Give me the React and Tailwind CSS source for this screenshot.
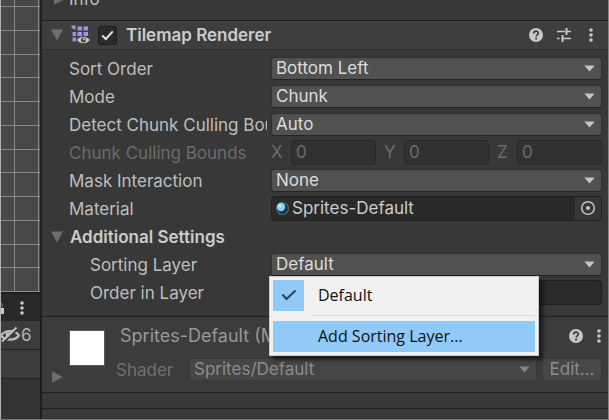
import React from "react";

const UI = "font-['Inter','Liberation_Sans',sans-serif] text-[17px] leading-5";

function Arrow({ className = "text-[#c4c4c4]" }) {
  return (
    <svg
      className={`pointer-events-none absolute right-[7px] top-[8px] ${className}`}
      width="11"
      height="7"
      viewBox="0 0 11 7"
      aria-hidden="true"
    >
      <path d="M0.3 0.5h10.4L5.5 6.5z" fill="currentColor" />
    </svg>
  );
}

function Dropdown({ id, value }) {
  return (
    <div className="relative min-w-0 flex-1">
      <select
        id={id}
        defaultValue={value}
        className="block h-[23px] w-full appearance-none rounded-[3px] border border-[#303030] border-b-[#242424] bg-[#515151] pl-1 pr-6 leading-5 text-[#dcdcdc] outline-none"
      >
        <option>{value}</option>
      </select>
      <Arrow />
    </div>
  );
}

function Row({ id, label, indent = false, muted = false, children }) {
  return (
    <div className="flex h-7 items-center gap-1 pl-[27px] pr-[6px]">
      <label
        htmlFor={id}
        className={`w-[198px] shrink-0 overflow-hidden whitespace-nowrap pt-0.5 ${indent ? "pl-[21px]" : ""} ${
          muted ? "text-[#6c6c6c]" : "text-[#bebebe]"
        }`}
      >
        {label}
      </label>
      {children}
    </div>
  );
}

function AxisField({ axis }) {
  const id = `bounds-${axis}`;
  return (
    <div className="flex min-w-0 flex-1 items-center">
      <label htmlFor={id} className="w-5 shrink-0 text-[#6c6c6c]">
        {axis}
      </label>
      <input
        id={id}
        disabled
        defaultValue="0"
        className="h-[25px] w-full min-w-0 rounded-[4px] border border-[#2b2b2b] border-t-[#252525] bg-[#313131] px-1 text-[#6c6c6c]"
      />
    </div>
  );
}

function Triangle({ right = false, className = "" }) {
  return (
    <svg className={`shrink-0 ${className}`} width="12" height="12" viewBox="0 0 12 12" aria-hidden="true">
      <path d={right ? "M1 0.3L11.7 6L1 11.7z" : "M0 0.5h12L6 11.5z"} fill="#6e6e6e" />
    </svg>
  );
}

function HelpIcon() {
  return (
    <svg width="16" height="16" viewBox="0 0 16 16" aria-hidden="true">
      <circle cx="8" cy="8" r="7" fill="#c8c8c8" />
      <path
        d="M5.7 6.4C5.7 3.2 10.3 3.4 10.3 6.1C10.3 7.8 8.2 7.8 8.2 9.5"
        fill="none"
        stroke="#3c3c3c"
        strokeWidth="1.7"
      />
      <rect x="7.2" y="10.6" width="1.9" height="1.9" fill="#3c3c3c" />
    </svg>
  );
}

function PresetIcon() {
  return (
    <svg width="16" height="16" viewBox="0 0 16 16" aria-hidden="true">
      <g stroke="#c8c8c8" fill="none">
        <path d="M1 4.5h8M10.5 4.5H15M1 11.5h2.5M6.5 11.5H15" strokeWidth="1.6" />
        <path d="M10.5 1v7M6.5 8v7" strokeWidth="2" />
      </g>
    </svg>
  );
}

function DotsIcon() {
  return (
    <svg width="6" height="16" viewBox="0 0 6 16" aria-hidden="true">
      <g fill="#c8c8c8">
        <circle cx="3" cy="3" r="1.8" />
        <circle cx="3" cy="8" r="1.8" />
        <circle cx="3" cy="13" r="1.8" />
      </g>
    </svg>
  );
}

function TilemapIcon() {
  return (
    <svg className="shrink-0" width="20" height="20" viewBox="0 0 20 20" aria-hidden="true">
      <g fill="#a78ee6">
        <path d="M0.5 0.5h4v4h-1.5l-2.5-2z" />
        <rect x="6.5" y="1.5" width="4.5" height="4" />
        <rect x="12.5" y="1.5" width="4.5" height="4" />
        <rect x="1.5" y="7" width="3.5" height="4" />
        <rect x="6.5" y="7" width="4.5" height="4" />
        <rect x="12.5" y="7" width="4.5" height="4" />
        <rect x="1.5" y="12.5" width="3.5" height="4" />
      </g>
      <path
        d="M5.5 15C8.5 10.2 16 10.2 19.4 15C16 19.8 8.5 19.8 5.5 15z"
        fill="#c8c8c0"
        stroke="#3e3e3e"
        strokeWidth="0.8"
      />
      <circle cx="12.4" cy="15" r="2.5" fill="#4a4a4a" />
      <circle cx="12.9" cy="14.3" r="1" fill="#c8c8c8" />
    </svg>
  );
}

function SceneGrid() {
  const rows = [6, 30, 54, 77, 101, 125, 149, 172, 196, 220, 244, 267, 291];
  return (
    <svg className="block w-full" height="292" viewBox="0 0 39 292" preserveAspectRatio="none" aria-hidden="true">
      <rect width="39" height="292" fill="#484848" />
      <g fill="#8a8a8a">
        {rows.map((y) => (
          <rect key={y} x="0" y={y} width="39" height="1" />
        ))}
        <rect x="13" y="0" width="1" height="292" />
        <rect x="37" y="0" width="1" height="292" />
      </g>
    </svg>
  );
}

function LeftPanel() {
  return (
    <aside className="flex w-10 shrink-0 flex-col overflow-hidden border-l border-[#b0b0b0] bg-[#333333]">
      <SceneGrid />
      <div className="flex h-[29px] items-center justify-between border-t-2 border-[#1e1e1e] bg-[#282828] pr-[15px]">
        <svg width="3" height="16" viewBox="0 0 3 16" aria-hidden="true">
          <path d="M0 2.5Q1.5 3 1.5 8M0 8h3v6H0z" fill="#c8c8c8" />
        </svg>
        <button type="button" aria-label="Panel options">
          <DotsIcon />
        </button>
      </div>
      <button
        type="button"
        aria-label="Hidden objects: 6"
        className="flex h-[29px] items-center gap-px border-b border-[#222222] bg-[#3c3c3c] text-[#b4b4b4]"
      >
        <svg width="19" height="16" viewBox="0 0 19 16" aria-hidden="true">
          <path d="M0 8.5C4 2.5 14 2.5 18 8.5C14 14 4 14 0 8.5z" fill="none" stroke="#c0c0c0" strokeWidth="2.2" />
          <path d="M4.5 6Q9 4 12 7L8 12Q4.500 10 4.5 6z" fill="#c0c0c0" />
          <path d="M2 16L16.500 2" stroke="#3c3c3c" strokeWidth="2" />
          <path d="M1 14.500L15.500 0.500" stroke="#c0c0c0" strokeWidth="2" />
        </svg>
        <span>6</span>
      </button>
      <div className="h-[29px] border-b border-[#262626] bg-[#3c3c3c]" />
    </aside>
  );
}

function LayerMenu() {
  return (
    <div
      role="menu"
      className="absolute -left-0.5 top-[23px] z-10 flex w-[270px] flex-col border border-[#c9c9c9] bg-[#f1f1f1] p-[3px] font-['Open_Sans','Noto_Sans',sans-serif] text-[16px] leading-5 text-[#101010] shadow-[4px_4px_4px_rgba(0,0,0,0.55)]"
    >
      <button type="button" role="menuitem" className="flex h-[31px] items-center gap-[14px] text-left">
        <span className="flex h-[31px] w-[31px] items-center justify-center bg-[#91c9f7]">
          <svg width="16" height="12" viewBox="0 0 16 12" aria-hidden="true">
            <path d="M1.5 5.5L5.5 10L14.5 1.5" fill="none" stroke="#2c4358" strokeWidth="2" />
          </svg>
        </span>
        Default
      </button>
      <div className="my-1 ml-[39px] h-px bg-[#dcdcdc]" />
      <button type="button" role="menuitem" className="mt-px h-[31px] bg-[#91c9f7] pl-[45px] text-left">
        Add Sorting Layer...
      </button>
    </div>
  );
}

function Inspector() {
  return (
    <main className="flex min-w-0 flex-1 flex-col border-l-2 border-r border-l-[#1e1e1e] border-r-[#858585] bg-[#383838]">
      <div className="flex h-5 flex-col justify-end overflow-hidden pb-[9px] pl-[11px] text-[#bebebe]">
        <div className="flex h-6 shrink-0 items-center gap-1">
          <Triangle right />
          Info
        </div>
      </div>

      <header className="flex h-[30px] items-center border-y border-b-[#303030] border-t-[#1c1c1c] bg-[#3e3e3e] pl-[9px] pr-[14px]">
        <Triangle />
        <span className="ml-2">
          <TilemapIcon />
        </span>
        <span className="relative ml-[7px] flex">
          <input
            id="tilemap-enabled"
            type="checkbox"
            defaultChecked
            className="h-[19px] w-[19px] appearance-none rounded-[3px] border border-[#1c1c1c] bg-[#2a2a2a]"
          />
          <svg
            className="pointer-events-none absolute left-[3px] top-1"
            width="13"
            height="11"
            viewBox="0 0 13 11"
            aria-hidden="true"
          >
            <path d="M1.2 5.5L4.8 9L11.8 1.3" fill="none" stroke="#e4e4e4" strokeWidth="2" />
          </svg>
        </span>
        <label htmlFor="tilemap-enabled" className="ml-[9px] flex-1 whitespace-nowrap font-semibold text-[#cccccc]">
          Tilemap Renderer
        </label>
        <div className="flex items-center gap-3">
          <button type="button" aria-label="Help">
            <HelpIcon />
          </button>
          <button type="button" aria-label="Presets">
            <PresetIcon />
          </button>
          <button type="button" aria-label="More options" className="ml-1">
            <DotsIcon />
          </button>
        </div>
      </header>

      <section className="pb-[10px] pt-1">
        <Row id="sort" label="Sort Order">
          <Dropdown id="sort" value="Bottom Left" />
        </Row>
        <Row id="mode" label="Mode">
          <Dropdown id="mode" value="Chunk" />
        </Row>
        <Row id="detect" label="Detect Chunk Culling Bounds">
          <Dropdown id="detect" value="Auto" />
        </Row>
        <Row id="bounds-X" label="Chunk Culling Bounds" muted>
          <div className="flex min-w-0 flex-1 gap-2">
            <AxisField axis="X" />
            <AxisField axis="Y" />
            <AxisField axis="Z" />
          </div>
        </Row>
        <Row id="mask" label="Mask Interaction">
          <Dropdown id="mask" value="None" />
        </Row>
        <Row id="material" label="Material">
          <div className="flex h-[25px] min-w-0 flex-1 items-center rounded-[4px] border border-[#202020] bg-[#292929] pl-[3px]">
            <svg className="shrink-0" width="15" height="15" viewBox="0 0 15 15" aria-hidden="true">
              <circle cx="7.5" cy="7.5" r="6" fill="#1b3441" stroke="#3f6a80" strokeWidth="1.2" />
              <circle cx="6" cy="6" r="4.2" fill="#82d2f5" />
              <circle cx="5" cy="5" r="1.6" fill="#c4ecfc" />
            </svg>
            <input
              id="material"
              readOnly
              defaultValue="Sprites-Default"
              className="min-w-0 flex-1 bg-transparent pl-0.5 text-[#cccccc] outline-none"
            />
            <button
              type="button"
              aria-label="Select material"
              className="flex h-full w-[26px] items-center justify-center rounded-r-[3px] bg-[#373737]"
            >
              <svg width="16" height="16" viewBox="0 0 16 16" aria-hidden="true">
                <circle cx="8" cy="8" r="6.3" fill="none" stroke="#c4c4c4" strokeWidth="1.5" />
                <circle cx="8" cy="8" r="2" fill="#c4c4c4" />
              </svg>
            </button>
          </div>
        </Row>
        <button
          type="button"
          className="flex h-7 w-full items-center gap-[7px] pl-[9px] pt-0.5 text-left font-semibold text-[#cccccc]"
        >
          <Triangle />
          Additional Settings
        </button>
        <Row id="layer" label="Sorting Layer" indent>
          <div className="relative flex min-w-0 flex-1">
            <Dropdown id="layer" value="Default" />
            <LayerMenu />
          </div>
        </Row>
        <Row id="order" label="Order in Layer" indent>
          <input
            id="order"
            className="h-[25px] min-w-0 flex-1 rounded-[4px] border border-[#1f1f1f] bg-[#2a2a2a] px-1 text-[#cccccc]"
          />
        </Row>
      </section>

      <section className="flex h-[77px] gap-[7px] border-y border-[#1f1f1f] bg-[#3c3c3c] pl-[9px] pr-[6px]">
        <div className="flex items-end pb-[9px]">
          <button type="button" aria-label="Expand material">
            <Triangle right />
          </button>
        </div>
        <div className="-ml-px mt-[13px] h-9 w-9 shrink-0 border border-[#5a5a5a] bg-white" />
        <div className="flex min-w-0 flex-1 flex-col pt-1">
          <div className="flex h-[30px] items-center pl-2">
            <h2 className="min-w-0 flex-1 overflow-hidden whitespace-nowrap text-[18px] text-[#989898]">
              Sprites-Default (Material)
            </h2>
            <div className="flex items-center gap-3">
              <button type="button" aria-label="Material help">
                <HelpIcon />
              </button>
              <button type="button" aria-label="Material options">
                <DotsIcon />
              </button>
            </div>
          </div>
          <div className="flex h-9 items-center gap-[5px]">
            <label htmlFor="shader" className="w-[72px] shrink-0 pl-1 pt-0.5 text-[#707070]">
              Shader
            </label>
            <div className="relative min-w-0 flex-1">
              <select
                id="shader"
                disabled
                className="block h-[23px] w-full appearance-none rounded-[3px] border border-[#393939] bg-[#464646] pl-1 leading-5 text-[#8c8c8c] opacity-100"
              >
                <option>Sprites/Default</option>
              </select>
              <Arrow className="text-[#858585]" />
            </div>
            <button
              type="button"
              disabled
              className="h-[23px] w-[60px] rounded-[3px] border border-[#393939] bg-[#484848] text-[#8c8c8c]"
            >
              Edit...
            </button>
          </div>
        </div>
      </section>
      <div className="h-4 border-b border-[#1f1f1f]" />
    </main>
  );
}

export default function App() {
  return (
    <div className={`flex min-h-screen overflow-hidden border-b border-[#777777] bg-[#383838] ${UI}`}>
      <LeftPanel />
      <Inspector />
    </div>
  );
}
